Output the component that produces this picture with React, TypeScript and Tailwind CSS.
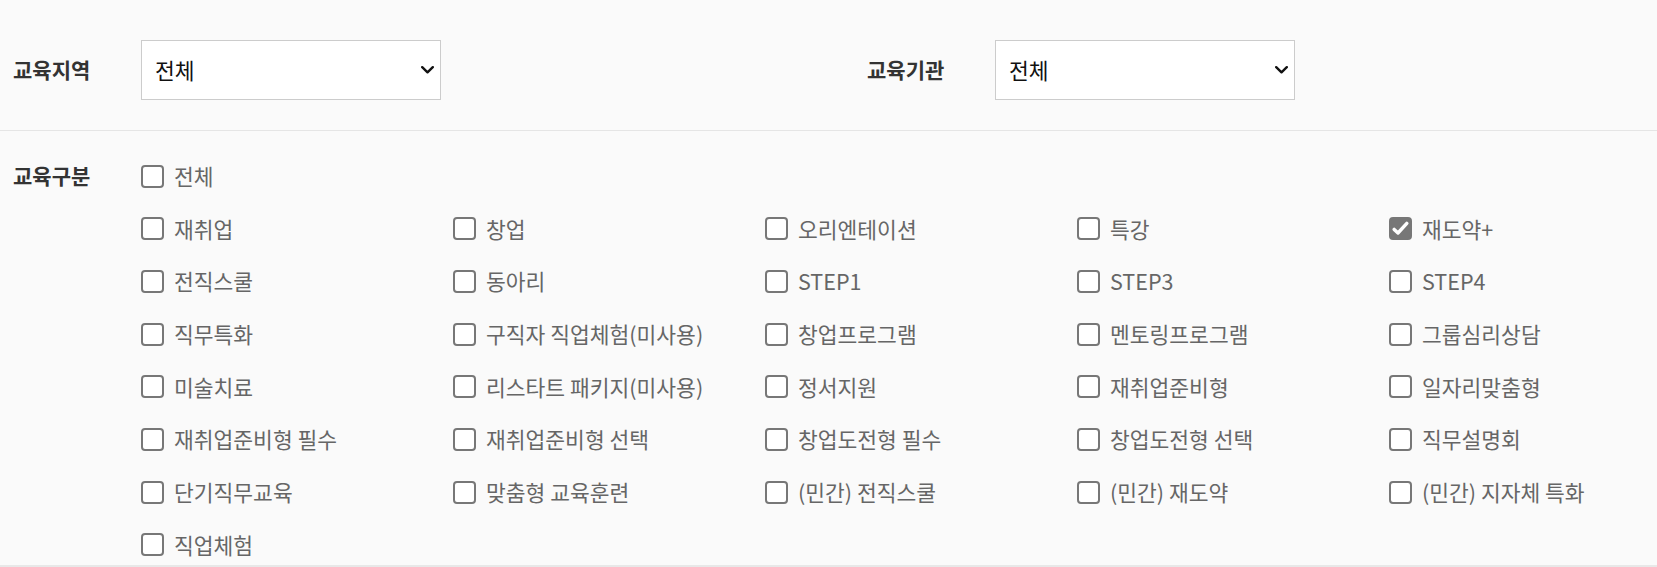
import React from 'react';

const rows: { label: string; checked?: boolean }[][] = [
  [{ label: '재취업' }, { label: '창업' }, { label: '오리엔테이션' }, { label: '특강' }, { label: '재도약+', checked: true }],
  [{ label: '전직스쿨' }, { label: '동아리' }, { label: 'STEP1' }, { label: 'STEP3' }, { label: 'STEP4' }],
  [{ label: '직무특화' }, { label: '구직자 직업체험(미사용)' }, { label: '창업프로그램' }, { label: '멘토링프로그램' }, { label: '그룹심리상담' }],
  [{ label: '미술치료' }, { label: '리스타트 패키지(미사용)' }, { label: '정서지원' }, { label: '재취업준비형' }, { label: '일자리맞춤형' }],
  [{ label: '재취업준비형 필수' }, { label: '재취업준비형 선택' }, { label: '창업도전형 필수' }, { label: '창업도전형 선택' }, { label: '직무설명회' }],
  [{ label: '단기직무교육' }, { label: '맞춤형 교육훈련' }, { label: '(민간) 전직스쿨' }, { label: '(민간) 재도약' }, { label: '(민간) 지자체 특화' }],
  [{ label: '직업체험' }],
];

function Select({ value }: { value: string }) {
  return (
    <div className="flex shrink-0 items-center justify-between w-[300px] h-[60px] bg-white border border-[#cccccc] pl-[13px] pr-[6px] cursor-pointer">
      <span className="text-[21.5px] text-[#111]">{value}</span>
      <svg width="13" height="8" viewBox="0 0 13 8" fill="none">
        <path d="M1.2 1.2L6.5 6.3L11.8 1.2" stroke="#111" strokeWidth="2.4" strokeLinecap="round" strokeLinejoin="round" />
      </svg>
    </div>
  );
}

function Check({ label, checked }: { label: string; checked?: boolean }) {
  return (
    <label className="flex items-center gap-[10px] h-[30px] cursor-pointer">
      <span
        className={`flex shrink-0 items-center justify-center w-[23px] h-[23px] rounded-[4px] border-2 border-[#777777] ${
          checked ? 'bg-[#777777]' : 'bg-white'
        }`}
      >
        {checked && (
          <svg width="17" height="15" viewBox="0 0 17 15" fill="none">
            <path d="M2.2 8.4L6 12L14.8 2.4" stroke="#fff" strokeWidth="3.4" strokeLinecap="round" strokeLinejoin="round" />
          </svg>
        )}
      </span>
      <span className="text-[21.5px] text-[#666666] whitespace-nowrap">{label}</span>
    </label>
  );
}

export default function App() {
  return (
    <main className="min-h-screen bg-[#fafafa] font-['Noto_Sans_CJK_KR','Noto_Sans',sans-serif]">
      {/* 지역 / 기관 */}
      <div className="flex items-center pt-[40px] pb-[30px] pl-[13px] border-b border-[#e5e5e5]">
        <span className="w-[128px] shrink-0 text-[21px] font-bold text-[#333]">교육지역</span>
        <Select value="전체" />
        <span className="w-[128px] shrink-0 ml-[426px] text-[21px] font-bold text-[#333]">교육기관</span>
        <Select value="전체" />
      </div>

      {/* 교육구분 */}
      <div className="flex pl-[13px] pt-[30px] pb-[5px] border-b-2 border-[#e8e8e8]">
        <span className="w-[128px] shrink-0 h-[30px] flex items-center text-[21px] font-bold text-[#333]">교육구분</span>
        <div className="grid grid-cols-[repeat(5,312px)] gap-y-[22.7px]">
          <div className="col-span-5">
            <Check label="전체" />
          </div>
          {rows.flat().map((item) => (
            <Check key={item.label} label={item.label} checked={item.checked} />
          ))}
        </div>
      </div>
    </main>
  );
}
